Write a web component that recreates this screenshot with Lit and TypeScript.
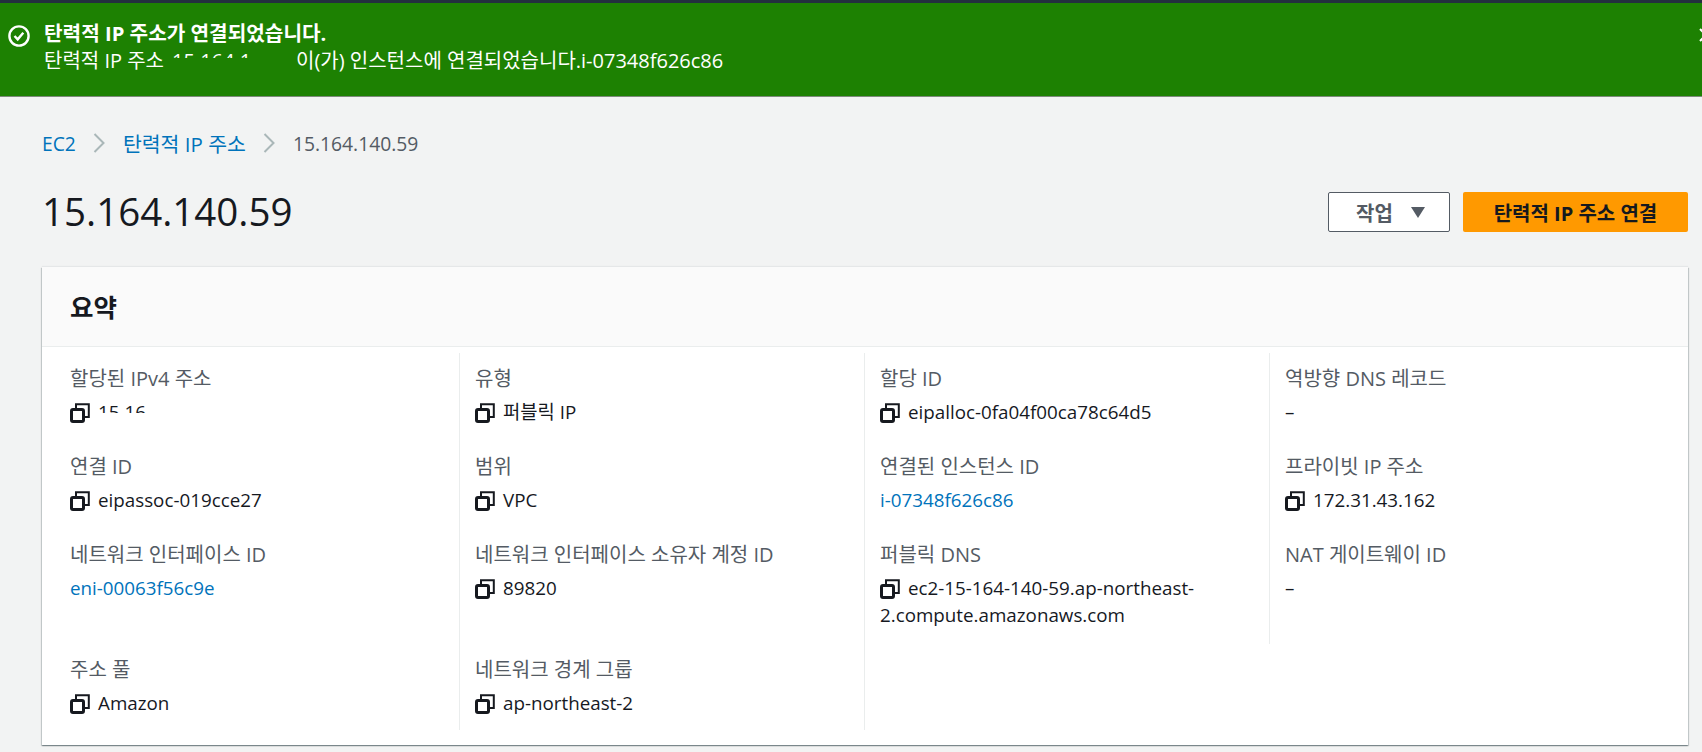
import { LitElement, html, css, svg } from "lit";
import { customElement } from "lit/decorators.js";

type Cell = { label: string; value?: string; copy?: boolean; link?: boolean; clip?: boolean; empty?: boolean };

const cells: Cell[] = [
  { label: "할당된 IPv4 주소", value: "15.16", copy: true, clip: true },
  { label: "유형", value: "퍼블릭 IP", copy: true },
  { label: "할당 ID", value: "eipalloc-0fa04f00ca78c64d5", copy: true },
  { label: "역방향 DNS 레코드", value: "–" },
  { label: "연결 ID", value: "eipassoc-019cce27", copy: true },
  { label: "범위", value: "VPC", copy: true },
  { label: "연결된 인스턴스 ID", value: "i-07348f626c86", link: true },
  { label: "프라이빗 IP 주소", value: "172.31.43.162", copy: true },
  { label: "네트워크 인터페이스 ID", value: "eni-00063f56c9e", link: true },
  { label: "네트워크 인터페이스 소유자 계정 ID", value: "89820", copy: true },
  { label: "퍼블릭 DNS", value: "ec2-15-164-140-59.ap-northeast-2.compute.amazonaws.com", copy: true },
  { label: "NAT 게이트웨이 ID", value: "–" },
  { label: "주소 풀", value: "Amazon", copy: true },
  { label: "네트워크 경계 그룹", value: "ap-northeast-2", copy: true },
  { label: "", empty: true },
  { label: "", empty: true },
];

const copyIcon = svg`<svg class="copy" width="20" height="20" viewBox="0 0 20 20" fill="none" stroke="#16191f"><path d="M6 5V1.2h12.8V14H15" stroke-width="2"/><rect x="1.5" y="6.5" width="12" height="12" rx="1.5" stroke-width="3"/></svg>`;

@customElement("app-root")
export class AppRoot extends LitElement {
  static styles = css`
    :host {
      display: block;
      height: 752px;
      overflow: hidden;
      background: #f2f3f3;
      font-family: "Open Sans", "Noto Sans CJK KR", sans-serif;
      color: #16191f;
      font-size: 19px;
    }
    .topbar { height: 3px; background: #232f3e; }
    .banner {
      height: 94px;
      box-sizing: border-box;
      background: #1d8102;
      border-bottom: 1px solid #7d8a7b;
      color: #fff;
      display: flex;
      padding: 17px 0 0 8px;
      position: relative;
      overflow: hidden;
    }
    .check { margin: 5px 14px 0 0; flex: none; }
    .banner-text { line-height: 27px; font-size: 20px; white-space: nowrap; }
    .banner-title { font-weight: 700; font-size: 20.2px; }
    .banner-line { display: flex; }
    .ip-clip { display: block; width: 124px; height: 11px; overflow: hidden; line-height: 27px; margin-left: 8px; flex: none; }
    .close { position: absolute; left: 1699px; top: 25px; }
    main { padding: 32px 14px 0 42px; }
    .crumbs { display: flex; align-items: center; height: 28px; color: #545b64; font-size: 19.3px; }
    .crumbs a { color: #0073bb; text-decoration: none; }
    .crumbs .ko { font-size: 20.5px; }
    .crumbs svg { margin: 0 18px 0 17px; flex: none; }
    .head { display: flex; align-items: center; justify-content: space-between; margin-top: 35px; height: 40px; }
    h1 { margin: -2px 0 0; font-size: 38.5px; font-weight: 400; line-height: 40px; }
    .actions { display: flex; gap: 13px; }
    .btn {
      height: 40px;
      box-sizing: border-box;
      display: flex;
      align-items: center;
      justify-content: center;
      border-radius: 2px;
      font-size: 20px;
      font-weight: 700;
    }
    .btn.ghost { width: 122px; background: #fff; border: 1px solid #545b64; color: #545b64; gap: 18px; padding-left: 3px; }
    .btn.primary { width: 225px; background: #ff9900; color: #16191f; }
    .card {
      margin-top: 35px;
      height: 478px;
      background: #fff;
      box-shadow: 0 1px 1px 0 rgba(0, 28, 36, 0.3), 1px 1px 1px 0 rgba(0, 28, 36, 0.15), -1px 1px 1px 0 rgba(0, 28, 36, 0.15), 0 -1px 1px 0 rgba(0, 28, 36, 0.05);
    }
    .card-head {
      height: 80px;
      box-sizing: border-box;
      background: #fafafa;
      border-bottom: 1px solid #eaeded;
      padding: 0 28px 3px;
      display: flex;
      align-items: center;
    }
    h2 { margin: 0; font-size: 25.5px; font-weight: 700; color: #16191f; }
    .grid {
      display: grid;
      grid-template-columns: 418px 405px 405px 1fr;
      grid-template-rows: 88px 88px 115px 86px;
      margin-top: 6px;
    }
    .cell { box-sizing: border-box; padding: 14px 16px 0 15px; border-right: 1px solid #eaeded; }
    .cell:nth-child(4n + 1) { padding-left: 28px; }
    .cell:nth-child(4n) { border-right: none; }
    .cell.empty { border-right: none; }
    .label { color: #545b64; font-size: 20px; line-height: 24px; white-space: nowrap; }
    .value { margin-top: 8px; line-height: 27px; font-size: 18.8px; color: #16191f; }
    .copy { vertical-align: -4px; margin-right: 8px; }
    .value a { color: #0073bb; text-decoration: none; }
    .clip { display: inline-block; height: 14px; overflow: hidden; vertical-align: top; }
  `;

  renderCell(c: Cell) {
    if (c.empty) return html`<div class="cell empty"></div>`;
    return html`<div class="cell">
      <div class="label">${c.label}</div>
      <div class="value">${c.copy ? copyIcon : ""}${c.link
        ? html`<a href="#">${c.value}</a>`
        : html`<span class=${c.clip ? "clip" : ""}>${c.value}</span>`}</div>
    </div>`;
  }

  render() {
    const chevron = html`<svg width="12" height="20" viewBox="0 0 12 20" fill="none" stroke="#aab7b8" stroke-width="2"><path d="M1.5 1l9 9-9 9"/></svg>`;
    return html`
      <div class="topbar"></div>
      <div class="banner">
        <svg class="check" width="22" height="22" viewBox="0 0 22 22" fill="none" stroke="#fff" stroke-width="2.4"><circle cx="11" cy="11" r="9.6"/><path d="M6.5 11l3.2 3.4 5.6-6.6"/></svg>
        <div class="banner-text">
          <div class="banner-title">탄력적 IP 주소가 연결되었습니다.</div>
          <div class="banner-line">탄력적 IP 주소<span class="ip-clip">15.164.1</span>이(가) 인스턴스에 연결되었습니다.i-07348f626c86</div>
        </div>
        <svg class="close" width="14" height="14" viewBox="0 0 14 14" fill="none" stroke="#fff" stroke-width="2"><path d="M1 1l12 12M13 1L1 13"/></svg>
      </div>
      <main>
        <nav class="crumbs">
          <a href="#">EC2</a>${chevron}<a class="ko" href="#">탄력적 IP 주소</a>${chevron}<span>15.164.140.59</span>
        </nav>
        <div class="head">
          <h1>15.164.140.59</h1>
          <div class="actions">
            <div class="btn ghost">작업
              <svg width="14" height="11" viewBox="0 0 14 11"><path d="M0 0h14L7 11z" fill="#545b64"/></svg>
            </div>
            <div class="btn primary">탄력적 IP 주소 연결</div>
          </div>
        </div>
        <section class="card">
          <div class="card-head"><h2>요약</h2></div>
          <div class="grid">${cells.map((c) => this.renderCell(c))}</div>
        </section>
      </main>
    `;
  }
}
